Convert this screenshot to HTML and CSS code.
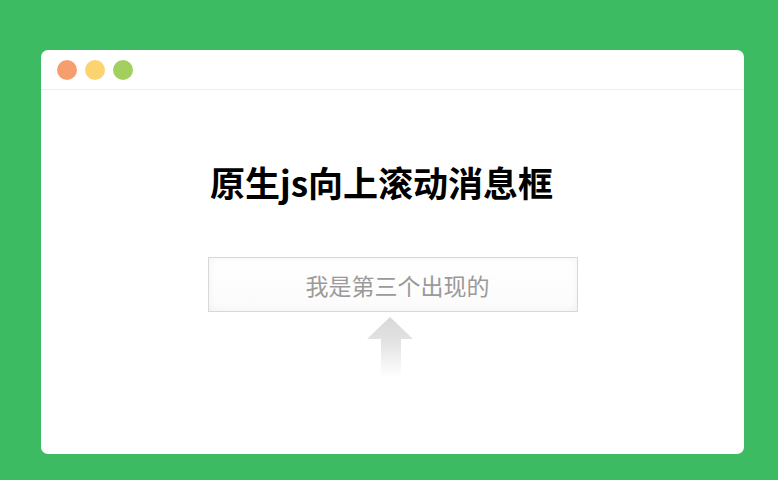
FILE: index.html
```html
<!DOCTYPE html>
<html lang="zh-CN">
<head>
<meta charset="utf-8">
<link rel="stylesheet" href="styles.css">
</head>
<body>
<div class="window">
  <div class="titlebar">
    <span class="dot dot-red"></span>
    <span class="dot dot-yellow"></span>
    <span class="dot dot-green"></span>
  </div>
  <div class="content">
    <h1 class="title">原生js向上滚动消息框</h1>
    <div class="box">我是第三个出现的</div>
    <div class="arrow">
      <svg width="46" height="60" viewBox="0 0 46 60">
        <defs>
          <linearGradient id="ag" x1="0" y1="0" x2="0" y2="1">
            <stop offset="0" stop-color="#d8d8d8"/>
            <stop offset="0.45" stop-color="#e4e4e4"/>
            <stop offset="1" stop-color="#ffffff"/>
          </linearGradient>
        </defs>
        <path d="M23 0 L46 22 L34 22 L34 60 L14 60 L14 22 L0 22 Z" fill="url(#ag)"/>
      </svg>
    </div>
  </div>
</div>
</body>
</html>
```
FILE: styles.css
```css
html, body {
  margin: 0;
  padding: 0;
}
body {
  background: #3dbb63;
  width: 778px;
  height: 480px;
  overflow: hidden;
  font-family: "Noto Sans CJK SC", "Noto Sans", sans-serif;
}
.window {
  margin: 50px 0 0 41px;
  width: 703px;
  height: 404px;
  background: #fff;
  border-radius: 7px;
}
.titlebar {
  border-bottom: 1px solid #eeeeee;
  display: flex;
  align-items: center;
  gap: 8px;
  padding-left: 16px;
  box-sizing: border-box;
  height: 40px;
  padding-top: 1px;
}
.dot {
  width: 20px;
  height: 20px;
  border-radius: 50%;
}
.dot-red { background: #f79e6f; }
.dot-yellow { background: #fbd371; }
.dot-green { background: #a3cf5e; }
.content {
  display: flex;
  flex-direction: column;
  align-items: center;
}
.title {
  margin: 71px 0 0 0;
  padding-right: 22px;
  font-size: 35px;
  line-height: 42px;
  font-weight: 700;
  color: #000;
}
.box {
  margin-top: 54px;
  width: 370px;
  height: 55px;
  box-sizing: border-box;
  border: 1px solid #d8d8d8;
  background: linear-gradient(#ffffff, #fbfbfb);
  box-shadow: inset 0 0 8px rgba(0,0,0,0.05);
  display: flex;
  align-items: center;
  justify-content: center;
  font-size: 23px;
  color: #9a9a9a;
  padding-top: 1px;
  padding-left: 10px;
}
.arrow {
  margin-top: 5px;
  margin-right: 5px;
  width: 46px;
  height: 60px;
}
.arrow svg { display: block; }
```
